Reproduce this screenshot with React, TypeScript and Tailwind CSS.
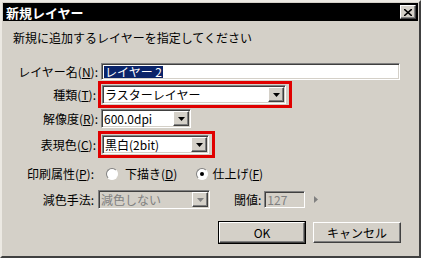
import React from 'react';

const font = { fontFamily: '"Noto Sans CJK JP", "Liberation Sans", sans-serif' };

const sunken =
  'border border-t-[#808080] border-l-[#808080] border-b-white border-r-white shadow-[inset_1px_1px_0_#404040,inset_-1px_-1px_0_#d4d0c8]';
const raised =
  'border border-t-white border-l-white border-b-[#404040] border-r-[#404040] shadow-[inset_-1px_-1px_0_#808080]';

const Mn: React.FC<{ label: string; k: string }> = ({ label, k }) => (
  <span>
    {label}(<span className="underline underline-offset-1">{k}</span>):
  </span>
);

const Arrow: React.FC<{ disabled?: boolean }> = ({ disabled }) => (
  <div className={`w-[16px] h-[15px] bg-[#d4d0c8] flex items-center justify-center ${raised}`}>
    <svg width="7" height="4" viewBox="0 0 7 4">
      <polygon points="0,0 7,0 3.5,4" fill={disabled ? '#808080' : '#000'} />
    </svg>
  </div>
);

const Select: React.FC<{ value: string; width: string; disabled?: boolean }> = ({ value, width, disabled }) => (
  <div className={`${width} h-[19px] ${disabled ? 'bg-[#d4d0c8] text-[#808080]' : 'bg-white text-black'} ${sunken} flex items-center pl-[2px] pr-[1px]`}>
    <span className="flex-1 leading-none whitespace-nowrap">{value}</span>
    <Arrow disabled={disabled} />
  </div>
);

const Radio: React.FC<{ checked?: boolean }> = ({ checked }) => (
  <div className="w-[12px] h-[12px] rounded-full bg-white border border-t-[#808080] border-l-[#808080] border-b-white border-r-white flex items-center justify-center">
    {checked && <div className="w-[4px] h-[4px] rounded-full bg-black" />}
  </div>
);

export default function App() {
  return (
    <div
      className="w-[421px] h-[258px] bg-[#d4d0c8] border-t-2 border-l-2 border-t-[#ece9e3] border-l-[#ece9e3] border-r-2 border-b-2 border-r-[#404040] border-b-[#404040] p-[1px] text-[12px] text-black overflow-hidden"
      style={font}
    >
      {/* title bar */}
      <div className="h-[18px] bg-black flex items-center justify-between pl-[3px] pr-[2px]">
        <span className="text-white font-bold text-[13px] leading-none">新規レイヤー</span>
        <div className={`w-[16px] h-[14px] bg-[#d4d0c8] flex items-center justify-center ${raised}`}>
          <svg width="8" height="7" viewBox="0 0 8 7">
            <path d="M0 0 L8 7 M8 0 L0 7" stroke="#000" strokeWidth="1.6" />
          </svg>
        </div>
      </div>

      <div className="pl-[10px] pt-[11px] leading-none">新規に追加するレイヤーを指定してください</div>

      <div className="flex flex-col mt-[19px]">
        {/* name */}
        <div className="flex items-center h-[17px]">
          <div className="w-[95px] text-right leading-none"><Mn label="レイヤー名" k="N" /></div>
          <div className={`ml-[3px] w-[299px] h-[17px] bg-white ${sunken} flex items-center pl-[2px]`}>
            <span className="bg-[#0a246a] text-white leading-none px-[1px]">レイヤー 2</span>
          </div>
        </div>

        {/* kind */}
        <div className="flex items-center mt-[1px]">
          <div className="w-[93px] text-right leading-none"><Mn label="種類" k="T" /></div>
          <div className="ml-[2px] border-[3px] border-[#e00000] p-[1px] pr-[3px]">
            <Select value="ラスターレイヤー" width="w-[184px]" />
          </div>
        </div>

        {/* resolution */}
        <div className="flex items-center mt-[1px]">
          <div className="w-[95px] text-right leading-none"><Mn label="解像度" k="R" /></div>
          <div className="ml-[3px]">
            <Select value="600.0dpi" width="w-[90px]" />
          </div>
        </div>

        {/* color */}
        <div className="flex items-center mt-[3px]">
          <div className="w-[93px] text-right leading-none"><Mn label="表現色" k="C" /></div>
          <div className="ml-[2px] border-[3px] border-[#e00000] p-[1px] pr-[3px]">
            <Select value="黒白(2bit)" width="w-[107px]" />
          </div>
        </div>

        {/* print */}
        <div className="flex items-center mt-[9px] h-[14px]">
          <div className="w-[91px] text-right leading-none"><Mn label="印刷属性" k="P" /></div>
          <div className="ml-[12px] flex items-center gap-[7px]">
            <Radio />
            <span className="leading-none">下描き(<span className="underline underline-offset-1">D</span>)</span>
          </div>
          <div className="ml-[19px] flex items-center gap-[4px]">
            <Radio checked />
            <span className="leading-none">仕上げ(<span className="underline underline-offset-1">F</span>)</span>
          </div>
        </div>

        {/* reduce */}
        <div className="flex items-center mt-[9px]">
          <div className="w-[91px] text-right leading-none">減色手法:</div>
          <div className="ml-[4px]">
            <Select value="減色しない" width="w-[112px]" disabled />
          </div>
          <span className="ml-[24px] leading-none">閾値:</span>
          <div className={`ml-[3px] w-[41px] h-[17px] bg-[#d4d0c8] ${sunken} flex items-center pl-[2px] text-[#808080] leading-none`}>
            127
          </div>
          <svg className="ml-[9px]" width="4" height="7" viewBox="0 0 4 7">
            <polygon points="0,0 4,3.5 0,7" fill="#808080" />
          </svg>
        </div>

        {/* buttons */}
        <div className="flex items-center mt-[12px] pl-[215px] gap-[7px]">
          <div className="w-[88px] h-[23px] border border-black">
            <div className={`w-full h-full bg-[#d4d0c8] ${raised} flex items-center justify-center leading-none`}>OK</div>
          </div>
          <div className={`w-[88px] h-[21px] bg-[#d4d0c8] ${raised} flex items-center justify-center leading-none`}>キャンセル</div>
        </div>
      </div>
    </div>
  );
}
